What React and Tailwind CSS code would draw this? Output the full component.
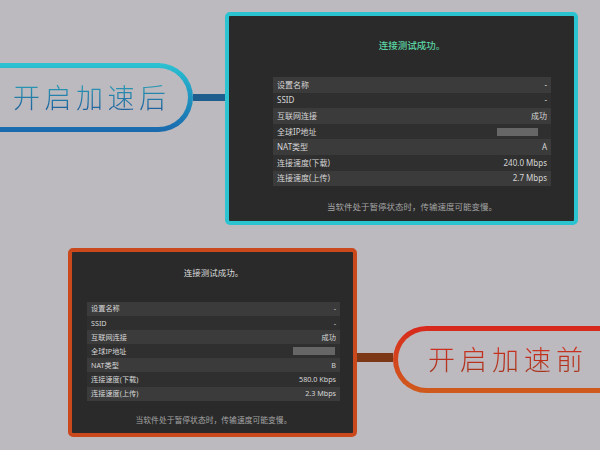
import React from "react";

const FONT = { fontFamily: '"Noto Sans", "Noto Sans CJK SC", sans-serif' };

const rowsAfter = [
    { label: "设置名称", value: "-" },
    { label: "SSID", value: "-" },
    { label: "互联网连接", value: "成功" },
    { label: "全球IP地址", blur: true },
    { label: "NAT类型", value: "A" },
    { label: "连接速度(下载)", value: "240.0 Mbps" },
    { label: "连接速度(上传)", value: "2.7 Mbps" },
];

const rowsBefore = [
    { label: "设置名称", value: "-" },
    { label: "SSID", value: "-" },
    { label: "互联网连接", value: "成功" },
    { label: "全球IP地址", blur: true },
    { label: "NAT类型", value: "B" },
    { label: "连接速度(下载)", value: "580.0 Kbps" },
    { label: "连接速度(上传)", value: "2.3 Mbps" },
];

// 结果表格
function ResultTable({ rows, rowClass, textClass, blurClass }) {
    return (
        <div className="flex flex-col">
            {rows.map((row, i) => (
                <div
                    key={row.label}
                    className={`flex items-center justify-between px-[4px] ${rowClass} ${
                        i % 2 === 0 ? "bg-[#3b3b3b]" : "bg-[#2f2f2f]"
                    }`}
                >
                    <span className={`text-[#d6d6d6] ${textClass}`}>{row.label}</span>
                    {row.blur ? (
                        <span className={`h-[8px] bg-[#666666] blur-[0.6px] ${blurClass}`} />
                    ) : (
                        <span className={`text-[#d6d6d6] ${textClass}`}>{row.value}</span>
                    )}
                </div>
            ))}
        </div>
    );
}

export default function App() {
    return (
        <div
            className="w-[600px] h-[450px] overflow-hidden bg-[#bdbabf] flex flex-col"
            style={FONT}
        >
            {/* 开启加速后 */}
            <div className="flex items-start pt-[12px]">
                <div className="ml-[-40px] mt-[51px] w-[233px] h-[69px] shrink-0 rounded-r-full bg-gradient-to-b from-[#2bc2d2] to-[#1a68ad] p-[5px] pl-0">
                    <div className="w-full h-full rounded-r-full bg-[#bdbabf] flex items-center pl-[53px]">
                        <span className="text-[27px] leading-none tracking-[4.5px] font-light bg-gradient-to-b from-[#2a9bb5] to-[#1f5f9c] bg-clip-text text-transparent">
                            开启加速后
                        </span>
                    </div>
                </div>
                <div className="mt-[82px] w-[32px] h-[7px] shrink-0 bg-[#1e5e8f]" />
                <div className="w-[353px] h-[213px] shrink-0 rounded-[5px] border-[4px] border-[#2cc3d0] bg-[#2a2a2a] flex flex-col">
                    <div className="ml-[44px] w-[278px] flex flex-col">
                        <div className="mt-[23px] h-[14px] leading-[14px] text-center text-[9.5px] font-medium text-[#5ad3a2]">
                            连接测试成功。
                        </div>
                        <div className="mt-[24px]">
                            <ResultTable
                                rows={rowsAfter}
                                rowClass="h-[15.6px]"
                                textClass="text-[8px] leading-none"
                                blurClass="w-[41px] mr-[9px]"
                            />
                        </div>
                        <div className="mt-[15px] h-[12px] leading-[12px] text-center text-[8.5px] text-[#a4a4a4]">
                            当软件处于暂停状态时，传输速度可能变慢。
                        </div>
                    </div>
                </div>
            </div>

            {/* 开启加速前 */}
            <div className="flex items-start mt-[23px]">
                <div className="ml-[68px] w-[289px] h-[189px] shrink-0 rounded-[5px] border-[4px] border-[#c9491d] bg-[#2a2a2a] flex flex-col">
                    <div className="ml-[15px] w-[253px] flex flex-col">
                        <div className="mt-[15px] h-[12px] leading-[12px] text-center text-[8.5px] text-[#dcdcdc]">
                            连接测试成功。
                        </div>
                        <div className="mt-[23px]">
                            <ResultTable
                                rows={rowsBefore}
                                rowClass="h-[14.1px]"
                                textClass="text-[7.2px] leading-none"
                                blurClass="w-[42px] mr-[1px]"
                            />
                        </div>
                        <div className="mt-[13px] h-[12px] leading-[12px] text-center text-[7.8px] text-[#a4a4a4]">
                            当软件处于暂停状态时，传输速度可能变慢。
                        </div>
                    </div>
                </div>
                <div className="mt-[105px] w-[36px] h-[9px] shrink-0 bg-[#7b3716]" />
                <div className="mt-[78px] w-[260px] h-[67px] shrink-0 rounded-l-full bg-gradient-to-b from-[#d8261c] to-[#cf5a1c] p-[5px] pr-0">
                    <div className="w-full h-full rounded-l-full bg-[#bdbabf] flex items-center pl-[30px]">
                        <span className="text-[27px] leading-none tracking-[5px] font-light bg-gradient-to-b from-[#cf2f1f] to-[#a6341d] bg-clip-text text-transparent">
                            开启加速前
                        </span>
                    </div>
                </div>
            </div>
        </div>
    );
}
